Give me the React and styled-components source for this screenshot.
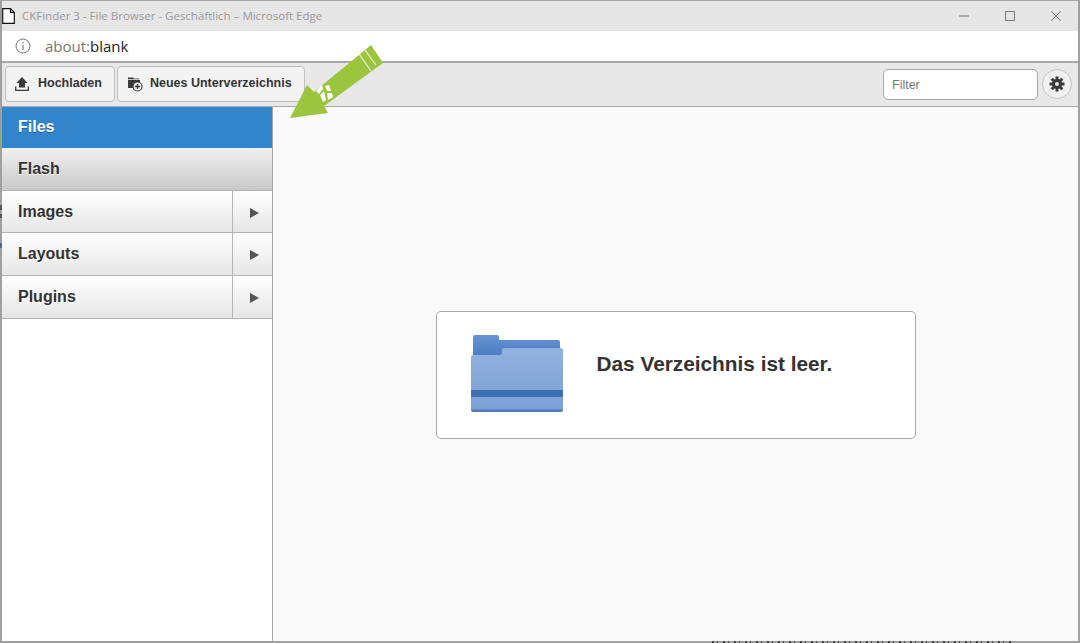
import React from 'react'
import styled, { createGlobalStyle } from 'styled-components'

const GlobalStyle = createGlobalStyle`
  html, body {
    margin: 0;
    padding: 0;
    background: #fff;
    overflow: hidden;
  }
  * {
    box-sizing: border-box;
  }
`

const Page = styled.div`
  position: relative;
  width: 1080px;
  height: 643px;
`

const Win = styled.div`
  width: 100%;
  height: 100%;
  display: flex;
  flex-direction: column;
  border-top: 1px solid #a3a3a3;
  border-left: 2px solid #a0a0a0;
  border-right: 2px solid #a0a0a0;
  border-bottom: 2px solid #a0a0a0;
  font-family: "Liberation Sans", Arial, sans-serif;
  overflow: hidden;
`

const TitleBar = styled.div`
  height: 30px;
  flex: none;
  display: flex;
  align-items: center;
  background: #e6e6e6;
`

const PageIcon = styled.svg`
  width: 13px;
  height: 16px;
  flex: none;
  margin-right: 7px;
  margin-bottom: 1px;
`

const TitleText = styled.div`
  flex: 1;
  font-family: "Open Sans", sans-serif;
  font-size: 11.5px;
  color: #9a9a9a;
  white-space: nowrap;
  padding-bottom: 1px;
`

const WinControls = styled.div`
  display: flex;
  align-items: center;
  gap: 36px;
  padding-right: 17px;
`

const WinIcon = styled.svg`
  width: 10px;
  height: 10px;
  display: block;
`

const AddressBar = styled.div`
  height: 32px;
  flex: none;
  display: flex;
  align-items: center;
  background: #fff;
  padding-left: 13px;
  font-family: "Open Sans", sans-serif;
  font-size: 15px;
  color: #222;
  border-bottom: 2px solid #a8a8a8;
`

const InfoIcon = styled.svg`
  width: 16px;
  height: 16px;
  margin-right: 14px;
`

const Scheme = styled.span`
  color: #777;
`

const Toolbar = styled.div`
  height: 44px;
  flex: none;
  display: flex;
  align-items: center;
  background: #e8e8e8;
  border-bottom: 1px solid #a8a8a8;
  padding: 0 6px 1px 3px;
  gap: 2px;
`

const ToolButton = styled.button`
  height: 36px;
  display: flex;
  align-items: center;
  gap: ${p => p.$gap}px;
  padding: 0 12px 2px ${p => p.$pad}px;
  background: #f3f3f3;
  border: 1px solid #c0c0c0;
  border-radius: 4px;
  font-family: "Liberation Sans", Arial, sans-serif;
  font-size: 12.5px;
  font-weight: 700;
  color: #333;
  white-space: nowrap;
`

const ToolIcon = styled.svg`
  width: ${p => p.$w}px;
  height: 16px;
  flex: none;
  overflow: visible;
  margin-top: 2px;
`

const Spacer = styled.div`
  flex: 1;
`

const FilterInput = styled.input`
  width: 155px;
  height: 31px;
  border: 1px solid #a8a8a8;
  border-radius: 5px;
  background: #fff;
  padding: 2px 8px 0;
  font-family: "Liberation Sans", Arial, sans-serif;
  font-size: 12.5px;
  margin-right: 2px;
  &::placeholder {
    color: #777;
    opacity: 1;
  }
`

const RoundButton = styled.button`
  width: 30px;
  height: 30px;
  border-radius: 50%;
  border: 1px solid #c4c4c4;
  background: #f1f1f1;
  padding: 0;
  display: flex;
  align-items: center;
  justify-content: center;
`

const GearIcon = styled.svg`
  width: 16px;
  height: 16px;
  display: block;
`

const Body = styled.div`
  flex: 1;
  min-height: 0;
  display: flex;
`

const Sidebar = styled.div`
  width: 271px;
  flex: none;
  background: #fff;
  border-right: 1px solid #a8a8a8;
`

const Row = styled.div`
  display: flex;
  align-items: stretch;
  height: ${p => p.$h}px;
  border-bottom: 1px solid ${p => (p.$active ? '#3285cb' : '#b4b4b4')};
  background: ${p =>
    p.$active
      ? '#3285cb'
      : p.$open
      ? 'linear-gradient(#f0f0f0, #c9c9c9)'
      : 'linear-gradient(#ffffff, #e6e6e6)'};
  color: ${p => (p.$active ? '#fff' : '#333')};
  font-size: 16px;
  font-weight: 700;
  text-shadow: ${p => (p.$active ? '0 1px 0 #1f5f96' : '0 1px 0 #fff')};
`

const RowLabel = styled.div`
  flex: 1;
  display: flex;
  align-items: center;
  padding-left: 16px;
`

const RowArrow = styled.div`
  width: 40px;
  flex: none;
  display: flex;
  align-items: center;
  justify-content: center;
  border-left: 1px solid #b4b4b4;
  padding-left: 4px;
  &::after {
    content: '';
    border-left: 9px solid #555;
    border-top: 5px solid transparent;
    border-bottom: 5px solid transparent;
    margin-top: 2px;
  }
`

const Main = styled.div`
  flex: 1;
  background: #f9f9f9;
  display: flex;
  align-items: flex-start;
  justify-content: center;
  padding-top: 204px;
`

const EmptyBox = styled.div`
  width: 480px;
  height: 128px;
  background: #fff;
  border: 1px solid #a8a8a8;
  border-radius: 5px;
  display: flex;
  align-items: center;
  padding-left: 34px;
`

const FolderIcon = styled.svg`
  width: 92px;
  height: 77px;
  flex: none;
  margin-right: 34px;
  margin-bottom: 3px;
`

const EmptyText = styled.div`
  font-size: 20.8px;
  font-weight: 700;
  color: #333;
  padding-bottom: 22px;
`

// green arrow painted over the toolbar
const Arrow = styled.svg`
  position: absolute;
  left: 0;
  top: 0;
  width: 400px;
  height: 130px;
  pointer-events: none;
`

// bits of the page behind the window that show through its border
const BottomLeak = styled.div`
  position: absolute;
  left: 712px;
  bottom: 0;
  width: 300px;
  height: 2px;
  background: repeating-linear-gradient(90deg, #444 0 2px, transparent 2px 5px, #444 5px 6px, transparent 6px 11px);
`

const EdgeLeak = styled.div`
  position: absolute;
  left: 0;
  top: ${p => p.$top}px;
  width: 2px;
  height: ${p => p.$h}px;
  background: ${p => p.$color};
`

const menu = [
  { name: 'Files', active: true, h: 41 },
  { name: 'Flash', open: true, h: 43 },
  { name: 'Images', more: true, h: 42 },
  { name: 'Layouts', more: true, h: 43 },
  { name: 'Plugins', more: true, h: 43 },
]

const teeth = [0, 45, 90, 135, 180, 225, 270, 315]

export default function App() {
  return (
    <Page>
      <GlobalStyle />
      <Win>
        <TitleBar>
          <PageIcon viewBox="0 0 13 16">
            <path d="M.7.7h7.800l3.800 3.800v10.800H.7z M8.500.7v3.800h3.800" fill="#fff" stroke="#111" strokeWidth="1.200" />
          </PageIcon>
          <TitleText>CKFinder 3 - File Browser - Geschäftlich – Microsoft Edge</TitleText>
          <WinControls>
            <WinIcon viewBox="0 0 10 10">
              <path d="M0 5h10" stroke="#777" strokeWidth="1" />
            </WinIcon>
            <WinIcon viewBox="0 0 10 10">
              <path d="M.5.5h9v9h-9z" fill="none" stroke="#777" strokeWidth="1" />
            </WinIcon>
            <WinIcon viewBox="0 0 10 10">
              <path d="M0 0l10 10M10 0L0 10" stroke="#777" strokeWidth="1" />
            </WinIcon>
          </WinControls>
        </TitleBar>
        <AddressBar>
          <InfoIcon viewBox="0 0 16 16">
            <circle cx="8" cy="8" r="7" fill="none" stroke="#777" strokeWidth="1" />
            <path d="M8 7v5M8 4v1.500" stroke="#666" strokeWidth="1" />
          </InfoIcon>
          <Scheme>about:</Scheme>blank
        </AddressBar>
        <Toolbar>
          <ToolButton $pad={9} $gap={9}>
            <ToolIcon $w={14} viewBox="0 0 14 16">
              <path d="M7 1l5.500 6H10v4.500H4V7H1.500z" fill="#3a3a3a" />
              <path d="M.7 10.500v3.800h12.600v-3.800" fill="none" stroke="#3a3a3a" strokeWidth="1.300" />
            </ToolIcon>
            Hochladen
          </ToolButton>
          <ToolButton $pad={10} $gap={8}>
            <ToolIcon $w={14} viewBox="0 0 14 16">
              <path d="M0 1.500h5l1 1H11v.8H0z" fill="#3a3a3a" />
              <path d="M0 4h12v8H0z" fill="#3a3a3a" />
              <circle cx="9.500" cy="10.500" r="4.500" fill="#f3f3f3" stroke="#3a3a3a" strokeWidth="1.200" />
              <path d="M9.500 8v5M7 10.500h5" stroke="#3a3a3a" strokeWidth="1.400" />
            </ToolIcon>
            Neues Unterverzeichnis
          </ToolButton>
          <Spacer />
          <FilterInput placeholder="Filter" />
          <RoundButton>
            <GearIcon viewBox="0 0 16 16">
              {teeth.map(a => (
                <rect key={a} x="6.500" y="0.500" width="3" height="4" fill="#3a3a3a" transform={`rotate(${a} 8 8)`} />
              ))}
              <circle cx="8" cy="8" r="5" fill="#3a3a3a" />
              <circle cx="8" cy="8" r="2" fill="#e4e4e4" />
            </GearIcon>
          </RoundButton>
        </Toolbar>
        <Body>
          <Sidebar>
            {menu.map(m => (
              <Row key={m.name} $active={m.active} $open={m.open} $h={m.h}>
                <RowLabel>{m.name}</RowLabel>
                {m.more && <RowArrow />}
              </Row>
            ))}
          </Sidebar>
          <Main>
            <EmptyBox>
              <FolderIcon viewBox="0 0 92 77">
                <defs>
                  <linearGradient id="front" x1="0" y1="0" x2="0" y2="1">
                    <stop offset="0" stopColor="#92b1de" />
                    <stop offset="1" stopColor="#7ba0d4" />
                  </linearGradient>
                  <linearGradient id="back" x1="0" y1="0" x2="0" y2="1">
                    <stop offset="0" stopColor="#6795d3" />
                    <stop offset="1" stopColor="#4a7cc0" />
                  </linearGradient>
                </defs>
                <path d="M2 2a2 2 0 0 1 2-2h22a2 2 0 0 1 2 2v3h59a2 2 0 0 1 2 2v15H2z" fill="url(#back)" />
                <path d="M0 22a2 2 0 0 1 2-2h26a3 3 0 0 0 3-3v-2a2 2 0 0 1 2-2h57a2 2 0 0 1 2 2v59a2 2 0 0 1-2 2H2a2 2 0 0 1-2-2z" fill="url(#front)" />
                <path d="M0 55h92v7H0z" fill="#3f70b0" />
                <path d="M0 74.500h92v.500a2 2 0 0 1-2 2H2a2 2 0 0 1-2-2z" fill="#4f7cb8" />
              </FolderIcon>
              <EmptyText>Das Verzeichnis ist leer.</EmptyText>
            </EmptyBox>
          </Main>
        </Body>
      </Win>
      <Arrow viewBox="0 0 400 130">
        <path d="M290 118L307 85L314 92L371 45L383 63L324 106L328 113z" fill="#9bc53d" />
        <path d="M359 54L371 71M365 50L376 65" stroke="#f0f0f0" strokeWidth="1.200" />
        <path d="M316 91L322 85L323 89L319 94z M320 95L324 91L326 100L323 102z M325 86L329 85L331 91L327 91z M327 93L332 93L333 97L328 100z" fill="#fff" />
      </Arrow>
      <BottomLeak />
      <EdgeLeak $top={130} $h={18} $color="#9aa67a" />
      <EdgeLeak $top={205} $h={5} $color="#555" />
      <EdgeLeak $top={214} $h={4} $color="#555" />
      <EdgeLeak $top={243} $h={5} $color="#4a6a9a" />
    </Page>
  )
}
